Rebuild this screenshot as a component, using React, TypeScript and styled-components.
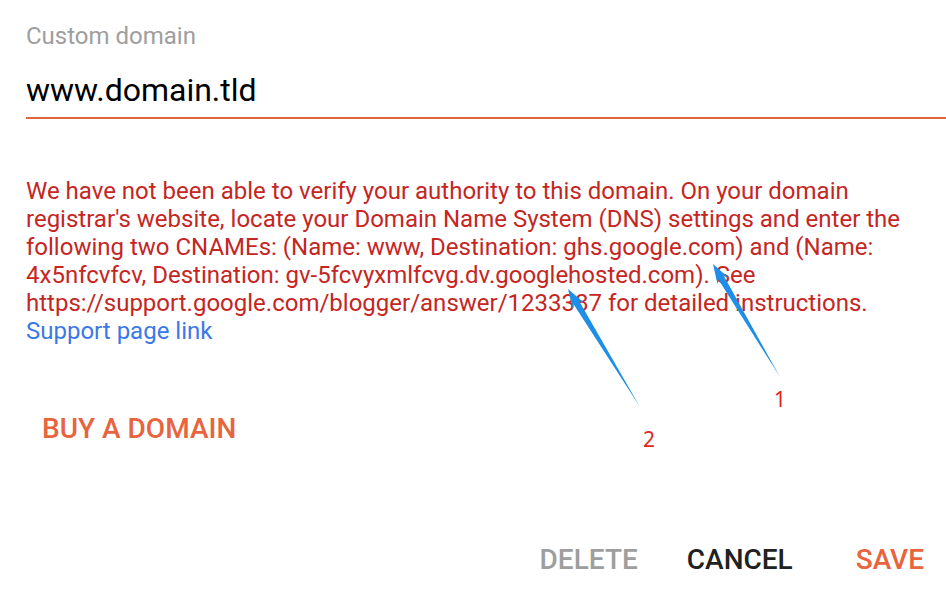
import React from 'react';
import styled, { createGlobalStyle } from 'styled-components';

const GlobalStyle = createGlobalStyle`
  body {
    margin: 0;
    background: #ffffff;
    font-family: Roboto, "Liberation Sans", Arial, sans-serif;
  }
`;

const Dialog = styled.div`
  position: relative;
  display: flex;
  flex-direction: column;
  width: 946px;
  height: 600px;
  padding: 22px 0 0 26px;
  box-sizing: border-box;
  overflow: hidden;
  background: #ffffff;
`;

const FieldLabel = styled.label`
  display: block;
  font-size: 24px;
  line-height: 28px;
  color: #9e9e9e;
`;

const DomainInput = styled.input`
  display: block;
  width: 100%;
  height: 38px;
  margin: 21px 0 0;
  padding: 0 0 8px;
  box-sizing: content-box;
  border: none;
  border-bottom: 2px solid #e0653c;
  outline: none;
  background: transparent;
  font-family: Roboto, "Liberation Sans", Arial, sans-serif;
  font-size: 32px;
  line-height: 38px;
  color: #000000;
`;

const ErrorText = styled.p`
  width: 894px;
  margin: 58px 0 0;
  font-size: 24px;
  line-height: 28px;
  color: #c5261f;
`;

const SupportLink = styled.a`
  display: block;
  color: #3b78e7;
  text-decoration: none;
`;

const TextButton = styled.button<{ $tone: 'accent' | 'muted' | 'plain' }>`
  padding: 0;
  border: none;
  background: none;
  font-family: Roboto, "Liberation Sans", Arial, sans-serif;
  font-size: 28px;
  line-height: 32px;
  font-weight: 500;
  cursor: pointer;
  color: ${({ $tone }) =>
    $tone === 'accent' ? '#e8643c' : $tone === 'muted' ? '#9e9e9e' : '#212121'};
`;

const BuyButton = styled(TextButton)`
  align-self: flex-start;
  margin: 68px 0 0 16px;
`;

const Actions = styled.div`
  display: flex;
  justify-content: flex-end;
  align-items: center;
  gap: 49px;
  margin-top: 99px;
  padding-right: 22px;
`;

const SaveButton = styled(TextButton)`
  margin-left: 14px;
`;

const Overlay = styled.svg`
  position: absolute;
  left: 0;
  top: 0;
  width: 946px;
  height: 600px;
  pointer-events: none;
`;

const Callout = styled.text`
  font-family: "Noto Sans", "Liberation Sans", sans-serif;
  font-size: 21px;
  fill: #e0261e;
`;

// tapered annotation arrow, tip -> tail
const arrowPoints = (tx: number, ty: number, ex: number, ey: number) => {
  const dx = ex - tx;
  const dy = ey - ty;
  const len = Math.hypot(dx, dy);
  const ux = dx / len;
  const uy = dy / len;
  const px = -uy;
  const py = ux;
  const at = (d: number, w: number) =>
    `${(tx + ux * d + px * w).toFixed(1)},${(ty + uy * d + py * w).toFixed(1)}`;
  return [at(0, 0), at(20, 6.5), at(16, 3.2), at(len, 0), at(16, -3.2), at(20, -6.5)].join(' ');
};

const App: React.FC = () => (
  <>
    <GlobalStyle />
    <Dialog>
      <FieldLabel>Custom domain</FieldLabel>
      <DomainInput readOnly value="www.domain.tld" />
      <ErrorText>
        We have not been able to verify your authority to this domain. On your domain
        registrar's website, locate your Domain Name System (DNS) settings and enter the
        following two CNAMEs: (Name: www, Destination: ghs.google.com) and (Name:
        4x5nfcvfcv, Destination: gv-5fcvyxmlfcvg.dv.googlehosted.com). See
        https://support.google.com/blogger/answer/1233387 for detailed instructions.
        <SupportLink href="#">Support page link</SupportLink>
      </ErrorText>
      <BuyButton $tone="accent">BUY A DOMAIN</BuyButton>
      <Actions>
        <TextButton $tone="muted">DELETE</TextButton>
        <TextButton $tone="plain">CANCEL</TextButton>
        <SaveButton $tone="accent">SAVE</SaveButton>
      </Actions>
      <Overlay viewBox="0 0 946 600">
        <polygon points={arrowPoints(713, 264, 780, 377)} fill="#1e8fe8" />
        <polygon points={arrowPoints(568, 289, 640, 407)} fill="#1e8fe8" />
        <Callout x="774" y="407">1</Callout>
        <Callout x="643" y="447">2</Callout>
      </Overlay>
    </Dialog>
  </>
);

export default App;
